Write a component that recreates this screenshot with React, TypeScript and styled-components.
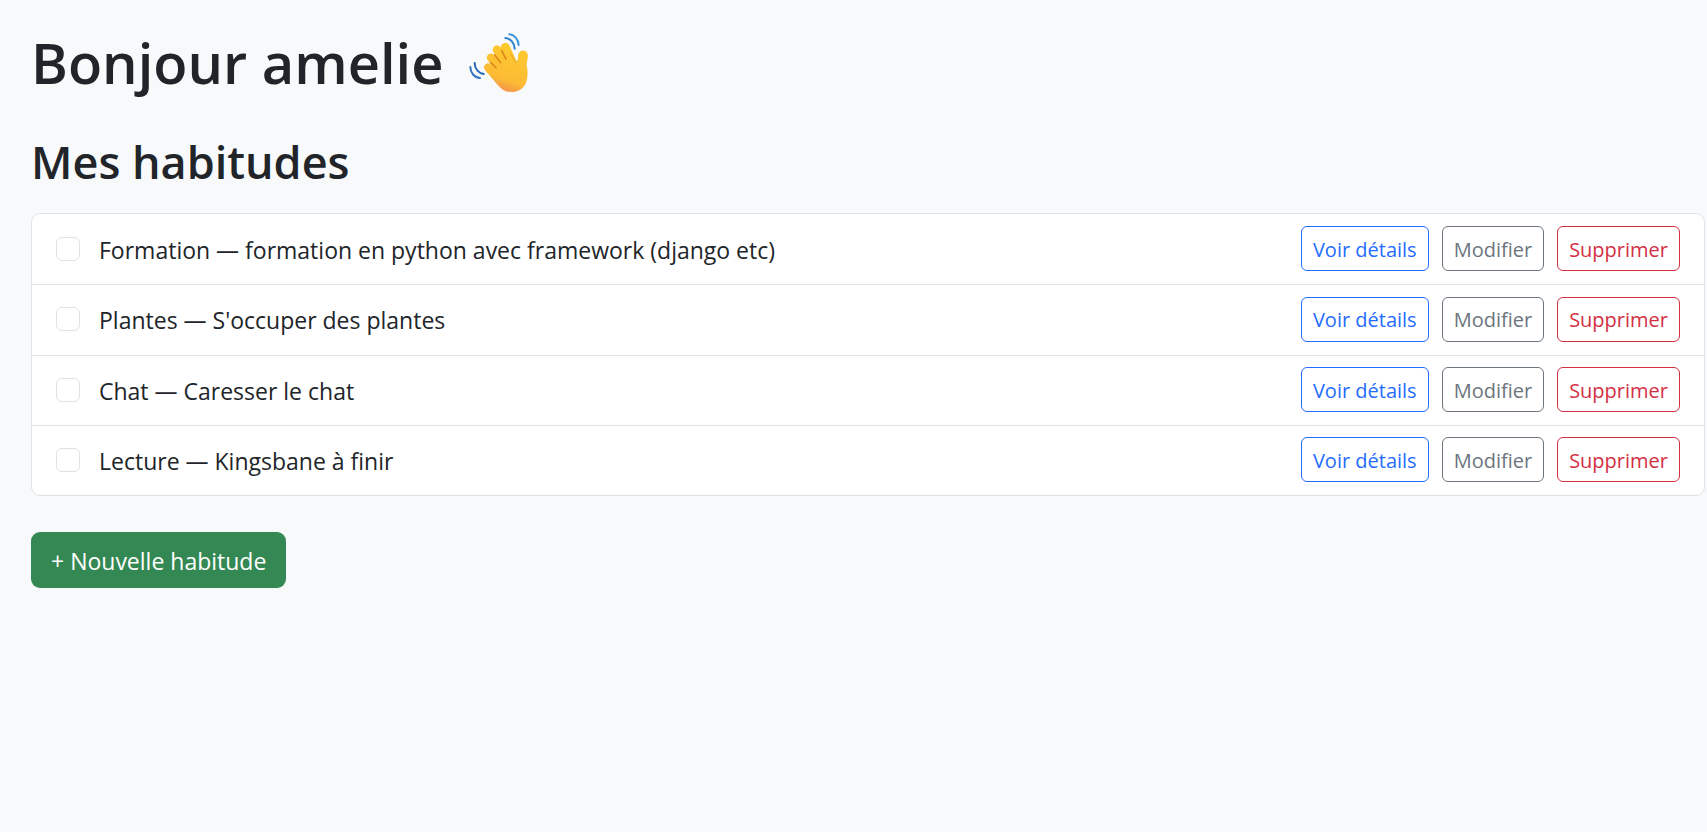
import React from "react";
import styled, { createGlobalStyle } from "styled-components";

const GlobalStyle = createGlobalStyle`
  *, *::before, *::after { box-sizing: border-box; }
  body {
    margin: 0;
    background: #f8f9fb;
    color: #212529;
    font-family: "Segoe UI", "Open Sans", "Noto Sans", sans-serif;
    font-size: 23px;
    line-height: 36px;
  }
`;

const Page = styled.main`
  padding: 26px 2px 28px 31px;
`;

const Title = styled.h1`
  display: flex;
  align-items: center;
  gap: 24px;
  margin: 0 0 32px;
  font-size: 56px;
  font-weight: 600;
  line-height: 72px;
`;

const Wave = styled.svg`
  width: 64px;
  height: 64px;
`;

const Subtitle = styled.h2`
  margin: 0 0 19px;
  font-size: 45px;
  font-weight: 600;
  line-height: 64px;
`;

const HabitList = styled.ul`
  display: grid;
  grid-auto-rows: 1fr;
  min-height: 283px;
  margin: 0 0 36px;
  padding: 0;
  list-style: none;
  background: #fff;
  border: 1px solid #dee2e6;
  border-radius: 9px;
`;

const HabitRow = styled.li`
  display: flex;
  align-items: center;
  justify-content: space-between;
  gap: 24px;
  padding: 0 24px 1px;
  & + & { border-top: 1px solid #dee2e6; }
`;

const HabitLabel = styled.label`
  display: flex;
  align-items: center;
  gap: 19px;
`;

const HabitText = styled.span`
  padding-top: 2px;
`;

const Checkbox = styled.input`
  appearance: none;
  flex: none;
  width: 24px;
  height: 24px;
  margin: 0;
  background: #fff;
  border: 1px solid #dee2e6;
  border-radius: 6px;
  &:checked { background: #0d6efd; border-color: #0d6efd; }
`;

const Actions = styled.div`
  display: flex;
  gap: 13px;
`;

const tones = { primary: "#256cff", secondary: "#6c757d", danger: "#d32f43" };

const ActionButton = styled.button<{ $tone: keyof typeof tones }>`
  height: 45px;
  padding: 2px 11px 0;
  font: inherit;
  font-size: 20px;
  white-space: nowrap;
  color: ${(p) => tones[p.$tone]};
  background: transparent;
  border: 1px solid ${(p) => tones[p.$tone]};
  border-radius: 6px;
  cursor: pointer;
`;

const NewButton = styled.button`
  height: 56px;
  padding: 2px 20px 0;
  font: inherit;
  color: #fff;
  background: #348853;
  border: 0;
  border-radius: 9px;
  cursor: pointer;
`;

const habits = [
  "Formation — formation en python avec framework (django etc)",
  "Plantes — S'occuper des plantes",
  "Chat — Caresser le chat",
  "Lecture — Kingsbane à finir",
];

function WavingHand() {
  return (
    <Wave viewBox="-6 -9 192 192" role="img" aria-label="Main qui salue">
      <defs>
        <linearGradient id="skin" gradientUnits="userSpaceOnUse" x1="140" y1="30" x2="92" y2="180">
          <stop offset="0" stopColor="#ffcb2d" />
          <stop offset="0.72" stopColor="#fbbb35" />
          <stop offset="1" stopColor="#f28a50" />
        </linearGradient>
      </defs>
      <g fill="none" strokeWidth="6" strokeLinecap="round">
        <path d="M121 4c15 1 27 14 28 32" stroke="#3a94dc" />
        <path d="M109 15c15 1 27 14 28 32" stroke="#2f83ce" />
        <path d="M17 90c0 16 11 31 27 33" stroke="#2468b5" />
        <path d="M4 102c0 17 12 32 29 33" stroke="#2f75c2" />
      </g>
      <g fill="none" stroke="url(#skin)" strokeLinecap="round">
        <path d="M109 43L134 98" strokeWidth="27" />
        <path d="M84 50L118 108" strokeWidth="26" />
        <path d="M66 74L104 124" strokeWidth="25" />
        <path d="M57 103L98 144" strokeWidth="23" />
        <path d="M162 67C162 86 154 104 150 126" strokeWidth="29" />
      </g>
      <path
        fill="url(#skin)"
        d="M48 111L84 82L130 75C142 91 151 93 158 91L173 96C176 108 176 120 175 133C172 161 154 177 128 177C108 177 96 167 83 152Z"
      />
      <g fill="none" stroke="#dc8a1c" strokeLinecap="round">
        <path d="M98 53L111 78" strokeWidth="5" />
        <path d="M77 66L95 89" strokeWidth="5" />
        <path d="M65 89L81 104" strokeWidth="5" />
        <path d="M124 60L138 85Q143 91 146 84" stroke="#eea226" strokeWidth="3" />
      </g>
    </Wave>
  );
}

export default function App() {
  return (
    <>
      <GlobalStyle />
      <Page>
        <Title>
          Bonjour amelie
          <WavingHand />
        </Title>
        <Subtitle>Mes habitudes</Subtitle>
        <HabitList>
          {habits.map((habit) => (
            <HabitRow key={habit}>
              <HabitLabel>
                <Checkbox type="checkbox" />
                <HabitText>{habit}</HabitText>
              </HabitLabel>
              <Actions>
                <ActionButton type="button" $tone="primary">Voir détails</ActionButton>
                <ActionButton type="button" $tone="secondary">Modifier</ActionButton>
                <ActionButton type="button" $tone="danger">Supprimer</ActionButton>
              </Actions>
            </HabitRow>
          ))}
        </HabitList>
        <NewButton type="button">+ Nouvelle habitude</NewButton>
      </Page>
    </>
  );
}
